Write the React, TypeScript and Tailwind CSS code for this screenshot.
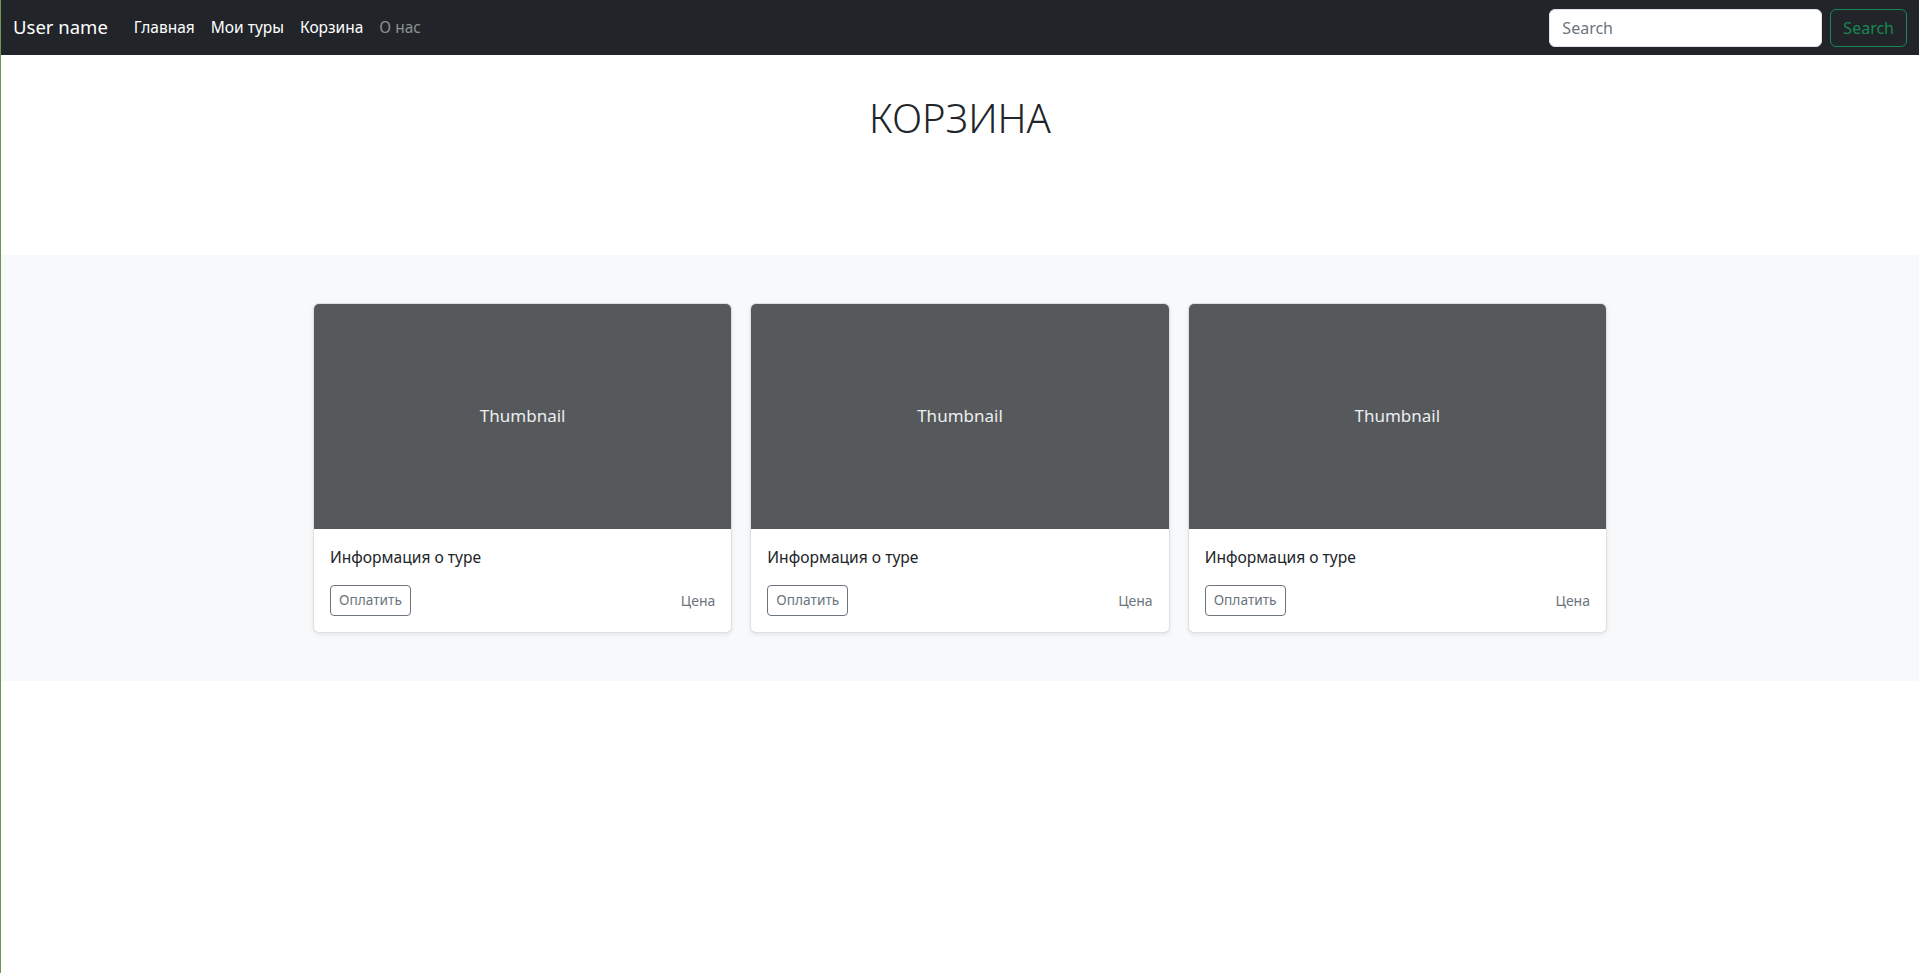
const links = [
  { label: 'Главная', muted: false },
  { label: 'Мои туры', muted: false },
  { label: 'Корзина', muted: false },
  { label: 'О нас', muted: true },
];

const tours = [1, 2, 3];

const TourCard = () => (
  <div className="overflow-hidden rounded-md border border-black/[0.125] bg-white shadow-[0_2px_4px_rgba(0,0,0,0.075)]">
    <div className="flex h-[225px] items-center justify-center bg-[#55595c] pb-0.5 text-[17px] text-[#eceeef]">
      Thumbnail
    </div>
    <div className="p-4">
      <p className="mb-4 text-[15.6px] leading-6 text-[#212529]">Информация о туре</p>
      <div className="flex items-center justify-between">
        <button
          type="button"
          className="h-[31px] rounded border border-[#6c757d] px-2 text-[13.7px] text-[#6c757d]"
        >
          Оплатить
        </button>
        <small className="text-sm text-[#6c757d]">Цена</small>
      </div>
    </div>
  </div>
);

const App = () => {
  return (
    <div className="min-h-screen border-l border-[#6f9456] bg-white font-['Noto_Sans',sans-serif]">
      <header className="flex h-[55px] items-center bg-[#212529] px-3 pb-0.5">
        <a href="#" className="mr-[18px] text-[18.5px] leading-[30px] text-white">
          User name
        </a>
        <nav className="flex">
          {links.map((link) => (
            <a
              key={link.label}
              href="#"
              className={
                link.muted
                  ? 'px-2 text-[15.5px] leading-6 text-[#8f9193]'
                  : 'px-2 text-[15.5px] leading-6 text-white'
              }
            >
              {link.label}
            </a>
          ))}
        </nav>
        <form className="ml-auto flex gap-2 pt-0.5">
          <input
            type="search"
            placeholder="Search"
            className="h-[38px] w-[273px] rounded-md border border-[#dee2e6] bg-white px-3 text-base text-[#212529] outline-none placeholder:text-[#6c757d]"
          />
          <button
            type="button"
            className="h-[38px] rounded-md border border-[#198754] px-3 text-base text-[#198754]"
          >
            Search
          </button>
        </form>
      </header>

      <section className="h-[200px] pt-[39px] text-center">
        <h1 className="text-[40px] font-light leading-[1.2] text-[#212529]">КОРЗИНА</h1>
      </section>

      <section className="bg-[#f8f9fa] py-12">
        <div className="mx-auto grid w-[1294px] grid-cols-3 gap-[18px]">
          {tours.map((id) => (
            <TourCard key={id} />
          ))}
        </div>
      </section>
    </div>
  );
};

export default App;
